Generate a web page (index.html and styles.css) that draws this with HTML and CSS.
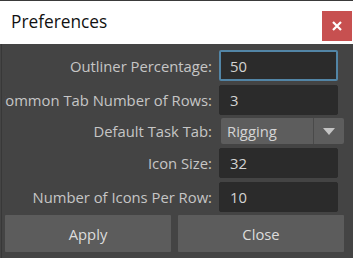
FILE: index.html
```html
<!DOCTYPE html>
<html>
<head>
<meta charset="utf-8">
<link rel="stylesheet" href="styles.css">
</head>
<body>
<div class="window">
  <div class="titlebar">
    <span class="title">Preferences</span>
    <div class="close">
      <svg width="10" height="10" viewBox="0 0 10 10"><path d="M1 1 L9 9 M9 1 L1 9" stroke="#fff" stroke-width="2.2"/></svg>
    </div>
  </div>
  <div class="content">
    <div class="form">
      <div class="row r1">
        <div class="label"><span>Outliner Percentage:</span></div>
        <div class="field focus">50</div>
      </div>
      <div class="row r2">
        <div class="label"><span>Common Tab Number of Rows:</span></div>
        <div class="field">3</div>
      </div>
      <div class="row r3">
        <div class="label"><span>Default Task Tab:</span></div>
        <div class="combo">
          <span class="combo-text">Rigging</span>
          <span class="combo-btn"><svg width="12" height="7" viewBox="0 0 12 7"><path d="M0 0 H12 L6 7 Z" fill="#c4c4c4"/></svg></span>
        </div>
      </div>
      <div class="row r4">
        <div class="label"><span>Icon Size:</span></div>
        <div class="field">32</div>
      </div>
      <div class="row r5">
        <div class="label"><span>Number of Icons Per Row:</span></div>
        <div class="field">10</div>
      </div>
    </div>
    <div class="buttons">
      <div class="btn">Apply</div>
      <div class="btn">Close</div>
    </div>
  </div>
</div>
</body>
</html>
```
FILE: styles.css
```css
html, body {
  margin: 0;
  padding: 0;
  width: 353px;
  height: 258px;
  overflow: hidden;
  background: #444444;
  font-family: "Open Sans", "Noto Sans", sans-serif;
}
.window {
  width: 353px;
  height: 258px;
  border-top: 1px solid #3a3a3a;
  box-sizing: border-box;
  display: flex;
  flex-direction: column;
}
.titlebar {
  height: 43px;
  background: #ffffff;
  display: flex;
  align-items: flex-start;
  justify-content: space-between;
}
.title {
  font-size: 17.3px;
  color: #111;
  padding-left: 11px;
  margin-top: 9px;
  font-family: "Open Sans", sans-serif;
}
.close {
  width: 30px;
  height: 30px;
  margin-top: 10px;
  margin-right: 1px;
  background: #c75050;
  display: flex;
  align-items: center;
  justify-content: center;
}
.content {
  flex: 1;
  background: #444444;
  border-left: 1px solid #444;
  box-shadow: inset 1px 0 0 #383838;
  display: flex;
  flex-direction: column;
  padding-top: 6px;
}
.form {
  display: flex;
  flex-direction: column;
}
.row {
  display: flex;
  align-items: center;
}
.r1 { height: 31px; }
.r2 { height: 30px; margin-top: 4px; }
.r3 { height: 26px; margin-top: 3px; }
.r4 { height: 30px; margin-top: 4px; }
.r5 { height: 30px; margin-top: 4px; }
.label {
  width: 207px;
  margin-left: 4px;
  display: flex;
  justify-content: flex-end;
  overflow: hidden;
  white-space: nowrap;
  color: #c6c6c6;
  font-size: 14.8px;
}
.label span {
  flex-shrink: 0;
}
.field {
  margin-left: 7px;
  width: 119px;
  height: 100%;
  box-sizing: border-box;
  background: #2b2b2b;
  border: 1px solid #2b2b2b;
  border-radius: 2px;
  color: #d4d4d4;
  font-size: 14.8px;
  padding-left: 10px;
  display: flex;
  align-items: center;
}
.field.focus {
  border: 2px solid #5285a6;
  padding-left: 9px;
}
.combo {
  margin-left: 9px;
  width: 123px;
  height: 100%;
  box-sizing: border-box;
  background: #5d5d5d;
  border-radius: 2px;
  display: flex;
  align-items: stretch;
  color: #d4d4d4;
  font-size: 14.8px;
}
.combo-text {
  flex: 1;
  padding-left: 6px;
  display: flex;
  align-items: center;
  border-right: 1px solid #4a4a4a;
}
.combo-btn {
  width: 30px;
  display: flex;
  align-items: center;
  justify-content: center;
}
.buttons {
  display: flex;
  gap: 7px;
  margin-top: 3px;
  margin-left: 4px;
  width: 339px;
}
.btn {
  flex: 1;
  height: 37px;
  background: #5c5c5c;
  border-radius: 1px;
  color: #dcdcdc;
  font-size: 14.8px;
  display: flex;
  align-items: center;
  justify-content: center;
}
```
